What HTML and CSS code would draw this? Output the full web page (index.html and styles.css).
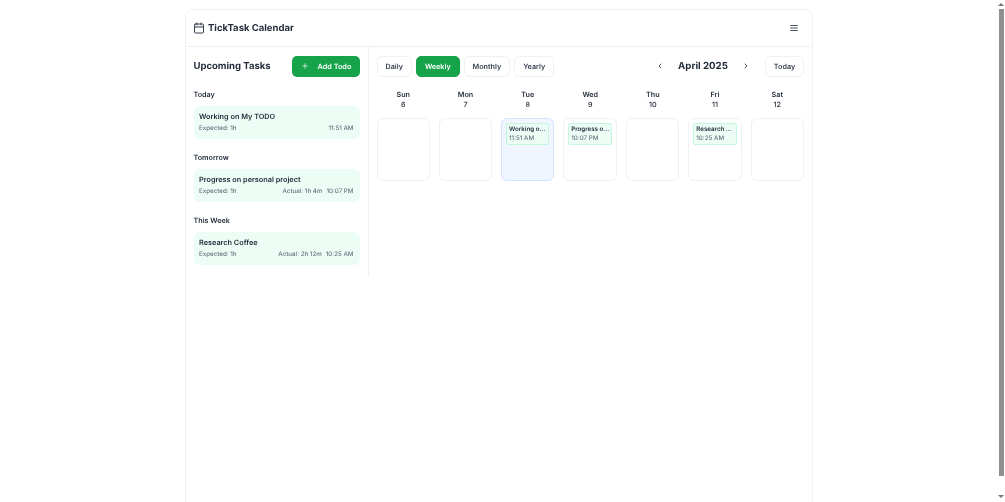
FILE: index.html
```html
<!DOCTYPE html>
<html lang="en">
<head>
<meta charset="utf-8">
<title>TickTask Calendar</title>
<link rel="stylesheet" href="styles.css">
</head>
<body>
<div class="viewport">
  <div class="page">
    <div class="card">
      <header class="topbar">
        <div class="brand">
          <svg class="brand-icon" viewBox="0 0 24 24" fill="none" stroke="currentColor" stroke-width="2" stroke-linecap="round" stroke-linejoin="round"><rect x="3" y="4" width="18" height="18" rx="2"/><path d="M16 2v4M8 2v4M3 10h18"/></svg>
          <h1>TickTask Calendar</h1>
        </div>
        <svg class="menu-icon" viewBox="0 0 24 24" fill="none" stroke="currentColor" stroke-width="2.6" stroke-linecap="round"><path d="M4 6h16M4 12h16M4 18h16"/></svg>
      </header>
      <div class="body">
        <aside class="sidebar">
          <div class="side-head">
            <h2>Upcoming Tasks</h2>
            <button class="add-btn"><svg viewBox="0 0 24 24" fill="none" stroke="currentColor" stroke-width="2" stroke-linecap="round"><path d="M12 5v14M5 12h14"/></svg><span>Add Todo</span></button>
          </div>
          <section class="group">
            <h3>Today</h3>
            <div class="task">
              <div class="task-title">Working on My TODO</div>
              <div class="task-meta"><span>Expected: 1h</span><span>11:51 AM</span></div>
            </div>
          </section>
          <section class="group">
            <h3>Tomorrow</h3>
            <div class="task">
              <div class="task-title">Progress on personal project</div>
              <div class="task-meta"><span>Expected: 1h</span><span class="right"><span>Actual: 1h 4m</span><span>10:07 PM</span></span></div>
            </div>
          </section>
          <section class="group">
            <h3>This Week</h3>
            <div class="task">
              <div class="task-title">Research Coffee</div>
              <div class="task-meta"><span>Expected: 1h</span><span class="right"><span>Actual: 2h 12m</span><span>10:25 AM</span></span></div>
            </div>
          </section>
        </aside>
        <main class="calendar">
          <div class="toolbar">
            <div class="views">
              <button class="btn">Daily</button>
              <button class="btn active">Weekly</button>
              <button class="btn">Monthly</button>
              <button class="btn">Yearly</button>
            </div>
            <div class="nav">
              <svg class="chev" viewBox="0 0 24 24" fill="none" stroke="currentColor" stroke-width="2.6" stroke-linecap="round" stroke-linejoin="round"><path d="m15 18-6-6 6-6"/></svg>
              <div class="month">April 2025</div>
              <svg class="chev" viewBox="0 0 24 24" fill="none" stroke="currentColor" stroke-width="2.6" stroke-linecap="round" stroke-linejoin="round"><path d="m9 18 6-6-6-6"/></svg>
              <button class="btn today">Today</button>
            </div>
          </div>
          <div class="week">
            <div class="day-head"><span>Sun</span><span>6</span></div>
            <div class="day-head"><span>Mon</span><span>7</span></div>
            <div class="day-head"><span>Tue</span><span>8</span></div>
            <div class="day-head"><span>Wed</span><span>9</span></div>
            <div class="day-head"><span>Thu</span><span>10</span></div>
            <div class="day-head"><span>Fri</span><span>11</span></div>
            <div class="day-head"><span>Sat</span><span>12</span></div>
            <div class="cell"></div>
            <div class="cell"></div>
            <div class="cell now"><div class="event"><div class="ev-title">Working o...</div><div class="ev-time">11:51 AM</div></div></div>
            <div class="cell"><div class="event"><div class="ev-title">Progress o...</div><div class="ev-time">10:07 PM</div></div></div>
            <div class="cell"></div>
            <div class="cell"><div class="event"><div class="ev-title">Research ...</div><div class="ev-time">10:25 AM</div></div></div>
            <div class="cell"></div>
          </div>
        </main>
      </div>
    </div>
  </div>
  <div class="scrollbar">
    <span class="arrow up"></span>
    <span class="thumb"></span>
    <span class="arrow down"></span>
  </div>
</div>
</body>
</html>
```
FILE: styles.css
```css
* { box-sizing: border-box; }
html, body { margin: 0; height: 100%; overflow: hidden; background: #fff; }
body { font-family: Inter, "Liberation Sans", sans-serif; color: #1f2937; text-rendering: geometricPrecision; }
button { font-family: inherit; text-rendering: inherit; cursor: pointer; }
h1, h2, h3 { margin: 0; }

.viewport { display: flex; height: 502px; overflow: hidden; }
.page { flex: 1; display: flex; justify-content: center; padding-top: 9px; min-width: 0; }
.card { width: 628px; height: 600px; border: 1px solid #eff0f2; border-radius: 8px; background: #fff; flex: none; will-change: transform; }

.topbar { height: 37px; display: flex; align-items: center; justify-content: space-between; padding: 0 13px 0 7px; border-bottom: 1px solid #eff0f2; }
.brand { display: flex; align-items: center; gap: 3px; }
.brand-icon { width: 12px; height: 12px; color: #374151; flex: none; }
.brand h1 { font-size: 9.5px; font-weight: 700; color: #1f2937; }
.menu-icon { width: 10px; height: 10px; color: #4b5563; }

.body { display: flex; align-items: flex-start; }
.sidebar { width: 183px; height: 230px; flex: none; padding: 8.5px 8px 0 7.5px; border-right: 1px solid #eff0f2; }
.side-head { display: flex; align-items: center; justify-content: space-between; height: 21px; margin-bottom: 12.5px; }
.side-head h2 { font-size: 9.5px; font-weight: 700; color: #1f2937; }
.add-btn { width: 68px; height: 21px; padding: 0 0 0 9px; display: flex; align-items: center; gap: 8.5px; border: none; border-radius: 5px; background: #16a34a; color: #fff; font-size: 7.3px; font-weight: 600; }
.add-btn svg { width: 8px; height: 8px; flex: none; }

.group { margin-bottom: 13.5px; }
.group h3 { font-size: 7.2px; font-weight: 600; line-height: 11px; color: #1f2937; margin-bottom: 5.5px; }
.task { height: 33px; padding: 6.5px 6.5px 0 5.5px; border-radius: 6px; background: #ecfdf5; }
.task-title { font-size: 7.3px; font-weight: 600; line-height: 10px; color: #1f2937; margin-bottom: 1.5px; }
.task-meta { display: flex; justify-content: space-between; font-size: 6.2px; font-weight: 500; line-height: 9px; color: #6b7280; }
.right { display: flex; gap: 4px; }

.calendar { flex: 1; padding: 8.5px 8px 0 7.5px; min-width: 0; }
.toolbar { display: flex; justify-content: space-between; align-items: center; height: 21px; margin-bottom: 13px; }
.views { display: flex; gap: 4px; }
.btn { height: 21px; padding: 0 8px; border: 1px solid #eff0f2; border-radius: 5px; background: #fff; color: #374151; font-size: 7.2px; font-weight: 600; }
.btn.active { background: #16a34a; border-color: #16a34a; color: #fff; }
.nav { display: flex; align-items: center; }
.chev { width: 8px; height: 8px; color: #374151; flex: none; }
.month { width: 78px; text-align: center; font-size: 9.7px; font-weight: 700; color: #1f2937; }
.today { width: 39px; padding: 0; margin-left: 15px; }

.week { display: grid; grid-template-columns: repeat(7, 1fr); gap: 7.5px 8.8px; }
.day-head { display: flex; flex-direction: column; align-items: center; font-size: 7.2px; font-weight: 500; line-height: 10.5px; color: #1f2937; height: 21px; }
.day-head span:first-child { font-weight: 600; }
.cell { height: 62.5px; padding: 4px; border: 1px solid #eff0f2; border-radius: 6px; background: #fff; }
.cell.now { background: #eff6ff; border-color: #d3e3fd; }
.event { height: 21.5px; padding: 2px; border: 1px solid #c6f6dc; border-radius: 2px; background: #ecfdf5; overflow: hidden; white-space: nowrap; }
.ev-title { font-size: 6.2px; font-weight: 600; line-height: 8.5px; color: #1f2937; }
.ev-time { font-size: 6.2px; font-weight: 500; line-height: 8.5px; color: #6b7280; }

.scrollbar { width: 8px; flex: none; display: flex; flex-direction: column; align-items: center; background: #fff; }
.thumb { flex: 1; width: 5px; margin: 3px 0 19px; background: #8f8f8f; }
.arrow { flex: none; width: 0; height: 0; border-left: 3px solid transparent; border-right: 3px solid transparent; margin-top: 3px; }
.arrow.up { border-bottom: 3px solid #777; }
.arrow.down { border-top: 3px solid #777; margin: 0 0 4px; }
```
